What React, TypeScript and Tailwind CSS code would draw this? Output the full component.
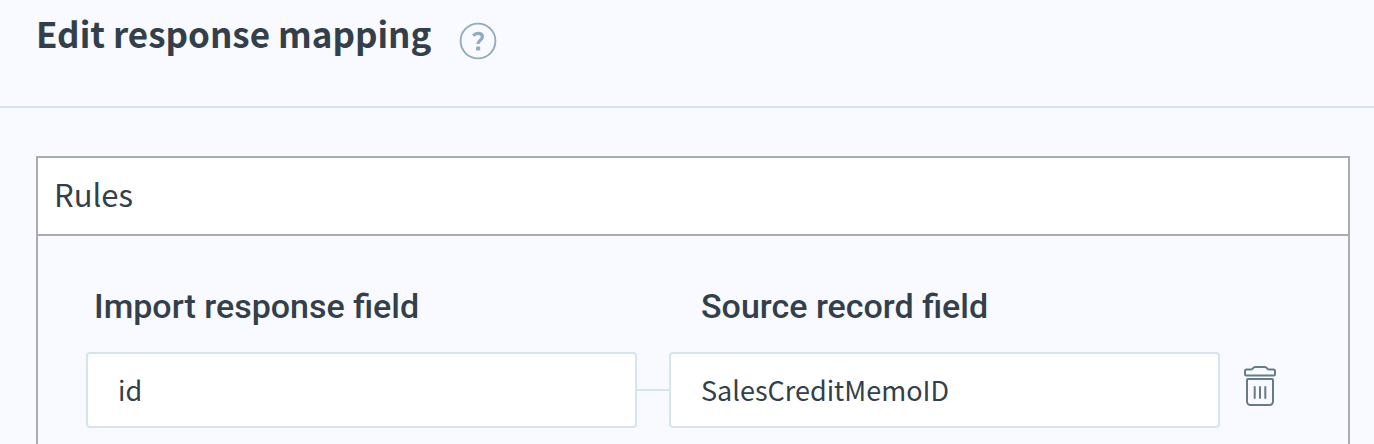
import type { ReactNode } from "react";

type Mapping = {
  id: string;
  importField: string;
  sourceField: string;
};

const mappings: Mapping[] = [
  { id: "row-1", importField: "id", sourceField: "SalesCreditMemoID" },
];

const HelpIcon = () => (
  <svg viewBox="0 0 38 38" className="size-[38px]" fill="none" aria-hidden="true">
    <circle cx="19" cy="19" r="17.4" stroke="#93abbe" strokeWidth="1.9" />
    <path
      d="M14.200 13.600c1.400-1.500 3-2.200 4.900-2.200 2.500 0 4.300 1.200 4.300 3.400 0 3.300-4.600 3.700-4.200 7.200"
      stroke="#93abbe"
      strokeWidth="3.2"
    />
    <rect x="17" y="24.4" width="4.2" height="4" rx="1.2" fill="#93abbe" />
  </svg>
);

const TrashIcon = () => (
  <svg
    viewBox="0 0 32 40"
    className="h-10 w-8"
    fill="none"
    stroke="#677a89"
    strokeWidth="2"
    strokeLinejoin="round"
    strokeLinecap="round"
    aria-hidden="true"
  >
    <path d="M2.500 3.500H7c1.800 0 2-2.500 4-2.500h10c2 0 2.200 2.500 4 2.500h4.500c1 0 1.500.5 1.500 1.500v3c0 1-.5 1.500-1.500 1.500h-27C1.500 9.500 1 9 1 8V5c0-1 .5-1.500 1.500-1.500Z" />
    <path d="M4 13h24a1 1 0 0 1 1 1v21.500a3.500 3.500 0 0 1-3.500 3.500h-19A3.500 3.500 0 0 1 3 35.500V14a1 1 0 0 1 1-1Z" />
    <path d="M10.700 21v11M16 21v11M21.300 21v11" />
  </svg>
);

const ColumnHeading = ({ id, children }: { id: string; children: ReactNode }) => (
  <h3
    id={id}
    className="font-[Roboto,sans-serif] text-[34px] leading-10 font-medium whitespace-nowrap"
  >
    {children}
  </h3>
);

const FieldInput = ({ labelledBy, value }: { labelledBy: string; value: string }) => (
  <input
    type="text"
    aria-labelledby={labelledBy}
    defaultValue={value}
    className="h-19 w-full min-w-0 flex-1 rounded-sm border-2 border-[#d6e4ee] bg-white px-[30px] pb-0.5 text-[27px] outline-none focus:border-[#93abbe]"
  />
);

const MappingRow = ({ mapping }: { mapping: Mapping }) => (
  <div className="flex items-center">
    <FieldInput labelledBy="import-heading" value={mapping.importField} />
    <span className="h-0.5 w-8 shrink-0 bg-[#d6e4ee]" />
    <FieldInput labelledBy="source-heading" value={mapping.sourceField} />
    <button type="button" aria-label="Delete mapping" className="ml-6 shrink-0 pb-2">
      <TrashIcon />
    </button>
  </div>
);

export default function App() {
  return (
    <div className="flex min-h-screen flex-col bg-[#f9faff] font-['Noto_Sans_CJK_SC','Noto_Sans',sans-serif] text-[#333f4a]">
      <header className="flex h-27 items-start gap-7 border-b-2 border-[#d6e4ee] px-9 pt-2">
        <h1 className="text-[35px] leading-[50px] font-bold">Edit response mapping</h1>
        <button type="button" aria-label="Help" className="mt-3.5">
          <HelpIcon />
        </button>
      </header>

      <main className="flex flex-1 flex-col pt-12 pr-6 pl-9">
        <section className="flex flex-1 flex-col border-x-2 border-t-2 border-[#acacb0]">
          <h2 className="border-b-2 border-[#acacb0] bg-white px-4 pt-4 pb-5 text-[31px] leading-10">
            Rules
          </h2>
          <div className="flex flex-col gap-[26px] pt-[50px] pr-18 pb-4 pl-12">
            <div className="grid grid-cols-2 gap-8 pr-12 pl-2">
              <ColumnHeading id="import-heading">Import response field</ColumnHeading>
              <div className="pl-6">
                <ColumnHeading id="source-heading">Source record field</ColumnHeading>
              </div>
            </div>
            {mappings.map((mapping) => (
              <MappingRow key={mapping.id} mapping={mapping} />
            ))}
          </div>
        </section>
      </main>
    </div>
  );
}
